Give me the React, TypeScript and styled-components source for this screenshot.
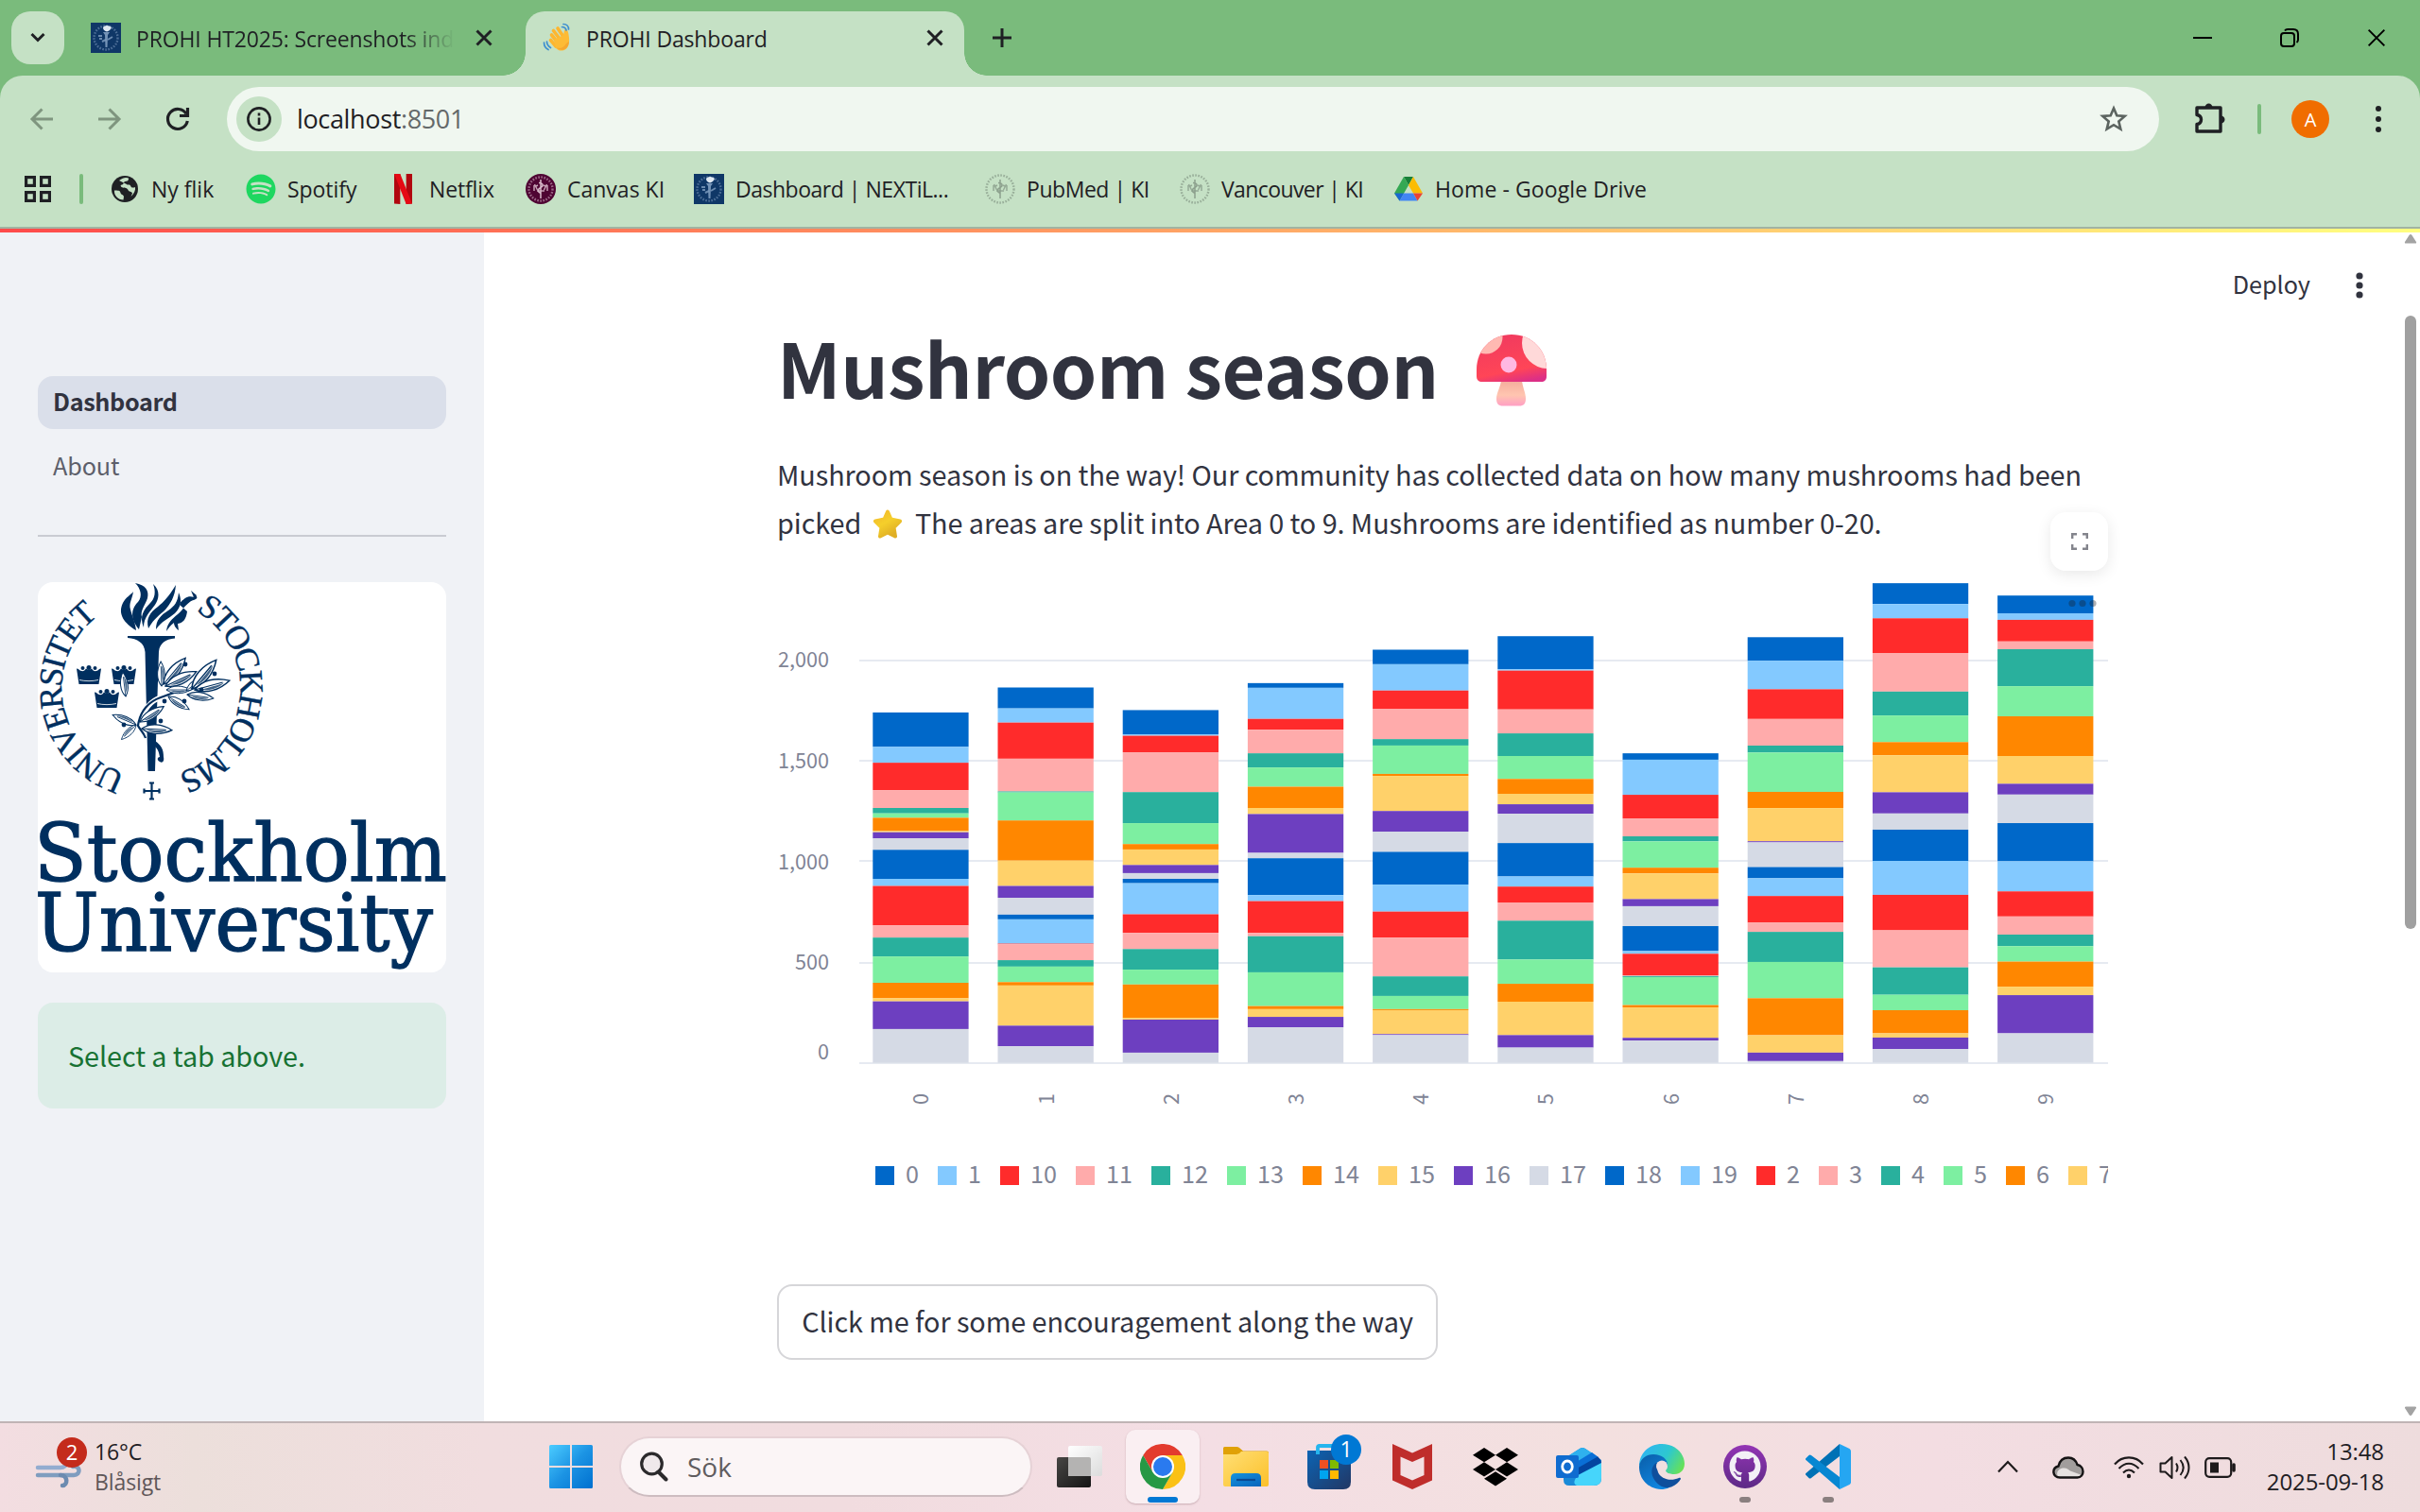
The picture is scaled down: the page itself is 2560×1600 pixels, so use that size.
import React from "react";
import styled, { createGlobalStyle, css } from "styled-components";
import { FaGithub, FaSpotify } from "react-icons/fa";

const segoe = `"Open Sans", "Noto Sans", sans-serif`;
const source = `"Noto Sans CJK SC", "Noto Sans", sans-serif`;

const Global = createGlobalStyle`
  *, *::before, *::after { box-sizing: border-box; }
  body { margin: 0; overflow: hidden; }
  svg { display: block; flex: none; }
`;

const Screen = styled.div`
  width: 2560px;
  height: 1600px;
  display: flex;
  flex-direction: column;
  overflow: hidden;
  background: #fff;
  font-family: ${segoe};
  color: #1f2024;
`;

/* ---------- browser chrome ---------- */

const TabStrip = styled.div`
  height: 80px;
  flex: none;
  display: flex;
  align-items: stretch;
  background: #7abb7c;
  padding: 12px 0 0 12px;
`;

const TabSearch = styled.button`
  width: 56px;
  height: 56px;
  padding: 0;
  border: 0;
  border-radius: 20px;
  background: #c5e1c5;
  display: grid;
  place-items: center;
`;

const Tab = styled.div<{ $width: number; $active?: boolean }>`
  position: relative;
  width: ${(p) => p.$width}px;
  display: flex;
  align-items: center;
  padding: 0 22px 12px ${(p) => (p.$active ? 18 : 28)}px;
  ${(p) =>
    p.$active &&
    css`
      background: #c5e1c5;
      border-radius: 20px 20px 0 0;
      &::before,
      &::after {
        content: "";
        position: absolute;
        bottom: 0;
        width: 24px;
        height: 24px;
      }
      &::before {
        left: -24px;
        background: radial-gradient(circle at 0 0, transparent 23.5px, #c5e1c5 24px);
      }
      &::after {
        right: -24px;
        background: radial-gradient(circle at 100% 0, transparent 23.5px, #c5e1c5 24px);
      }
    `}
`;

const TabTitle = styled.span<{ $fade?: boolean; $ml: number }>`
  flex: 1;
  margin-left: ${(p) => p.$ml}px;
  margin-right: 22px;
  padding-top: 2px;
  white-space: nowrap;
  overflow: hidden;
  font-size: 23px;
  line-height: 32px;
  letter-spacing: -0.15px;
  ${(p) =>
    p.$fade &&
    css`
      mask-image: linear-gradient(90deg, #000 84%, transparent 100%);
    `}
`;

const Spacer = styled.div`
  flex: 1;
`;

const Slot = styled.div<{ $w: number; $pb?: number }>`
  width: ${(p) => p.$w}px;
  flex: none;
  display: grid;
  place-items: center;
  padding-bottom: ${(p) => p.$pb ?? 0}px;
`;

const Toolbar = styled.div`
  height: 162px;
  flex: none;
  background: linear-gradient(#7abb7c, #7abb7c) top / 100% 30px no-repeat;
  border-bottom: 2px solid #a1b3a2;
`;

const ToolbarSurface = styled.div`
  height: 160px;
  border-radius: 24px 24px 0 0;
  background: #c5e1c5;
`;

const AddressRow = styled.div`
  height: 92px;
  display: flex;
  align-items: center;
  padding-left: 8px;
`;

const Omnibox = styled.div`
  width: 2044px;
  height: 68px;
  margin: 0 18px 0 16px;
  padding: 0 32px 0 10px;
  border-radius: 34px;
  background: #f0f7f0;
  display: flex;
  align-items: center;
`;

const InfoChip = styled.div`
  width: 48px;
  height: 48px;
  border-radius: 50%;
  background: #c5e1c5;
  display: grid;
  place-items: center;
`;

const Url = styled.span`
  flex: 1;
  margin-left: 16px;
  padding-bottom: 2px;
  font-size: 27px;
  letter-spacing: -0.35px;
  span {
    color: #64696a;
  }
`;

const Divider = styled.i<{ $h: number; $m: string }>`
  width: 4px;
  height: ${(p) => p.$h}px;
  margin: ${(p) => p.$m};
  border-radius: 2px;
  background: #7abb7c;
`;

const Avatar = styled.div`
  width: 40px;
  height: 40px;
  border-radius: 50%;
  background: #f06d00;
  color: #fff;
  font-size: 20px;
  display: grid;
  place-items: center;
`;

const Bookmarks = styled.div`
  height: 56px;
  display: flex;
  align-items: center;
  padding-left: 26px;
`;

const Bookmark = styled.div<{ $w: number; $ls?: number }>`
  width: ${(p) => p.$w}px;
  display: flex;
  align-items: center;
  gap: 12px;
  white-space: nowrap;
  font-size: 23px;
  letter-spacing: ${(p) => p.$ls ?? -0.05}px;
`;

/* ---------- page ---------- */

const Page = styled.div`
  height: 1262px;
  flex: none;
  display: flex;
  flex-direction: column;
  font-family: ${source};
  color: #31333f;
`;

const Decoration = styled.div`
  height: 4px;
  flex: none;
  background: linear-gradient(90deg, #ff4b4b, #ffff80);
`;

const Columns = styled.div`
  flex: 1;
  display: flex;
`;

const Sidebar = styled.aside`
  width: 512px;
  flex: none;
  background: #f0f2f6;
  padding: 152px 40px 0;
`;

const NavItem = styled.div<{ $active?: boolean }>`
  height: 56px;
  margin-bottom: 12px;
  padding: 0 16px 2px;
  border-radius: 16px;
  display: flex;
  align-items: center;
  font-size: 25.2px;
  line-height: 1;
  letter-spacing: ${(p) => (p.$active ? -0.35 : -0.1)}px;
  color: ${(p) => (p.$active ? "#31333f" : "#5d5f6a")};
  font-weight: ${(p) => (p.$active ? 700 : 400)};
  background: ${(p) => (p.$active ? "#dadfea" : "transparent")};
`;

const Rule = styled.hr`
  height: 2px;
  border: 0;
  margin: 44px 0 48px;
  background: #c9cbd2;
`;

const LogoCard = styled.div`
  width: 432px;
  height: 413px;
  border-radius: 16px;
  background: #fff;
  overflow: hidden;
`;

const Alert = styled.div`
  height: 112px;
  margin-top: 32px;
  padding: 0 32px 2px;
  border-radius: 16px;
  background: #dcede7;
  color: #177233;
  font-size: 28.8px;
  letter-spacing: -0.08px;
  display: flex;
  align-items: center;
`;

const Main = styled.main`
  flex: 1;
`;

const AppHeader = styled.header`
  height: 112px;
  display: flex;
  align-items: center;
  justify-content: flex-end;
  padding-right: 14px;
  font-size: 25.2px;
`;

const DeployLabel = styled.span`
  padding-bottom: 4px;
`;

const Block = styled.section`
  width: 1408px;
  margin-left: 310px;
`;

const Title = styled.h1`
  margin: 0;
  height: 60px;
  display: flex;
  align-items: center;
  font-size: 79.2px;
  line-height: 60px;
  letter-spacing: -0.36px;
  font-weight: 700;
  white-space: nowrap;
`;

const MushroomSlot = styled.span`
  margin: 8px 0 0 39px;
`;

const Intro = styled.p`
  margin: 58px 0 12px;
  font-size: 28.8px;
  line-height: 51.2px;
  letter-spacing: -0.07px;
  white-space: nowrap;
`;

const StarSlot = styled.span`
  display: inline-block;
  width: 32px;
  height: 32px;
  margin: 0 7px 0 5px;
  vertical-align: -6px;
`;

const ChartFrame = styled.div`
  position: relative;
  height: 700px;
  overflow: visible;
`;

const FullscreenButton = styled.button`
  position: absolute;
  top: -48px;
  right: 0;
  width: 61px;
  height: 62px;
  padding: 0;
  border: 0;
  border-radius: 16px;
  background: #fff;
  box-shadow: 0 4px 16px rgba(0, 0, 0, 0.09);
  display: grid;
  place-items: center;
`;

const EncourageButton = styled.button`
  width: 699px;
  height: 80px;
  margin-top: 69px;
  padding: 0 0 3px;
  border: 2px solid #d6d6d9;
  border-radius: 16px;
  background: #fff;
  color: #31333f;
  font-family: ${source};
  font-size: 28.8px;
  letter-spacing: -0.07px;
  white-space: nowrap;
`;

const Scrollbar = styled.div`
  width: 20px;
  flex: none;
  display: flex;
  flex-direction: column;
  align-items: center;
  padding: 2px 0 6px;
`;

const Thumb = styled.div`
  width: 12px;
  height: 649px;
  margin-top: 76px;
  border-radius: 6px;
  background: #a0a0a0;
`;

/* ---------- taskbar ---------- */

const Taskbar = styled.div`
  height: 96px;
  flex: none;
  display: flex;
  align-items: stretch;
  border-top: 2px solid #c0b4b5;
  background: linear-gradient(90deg, #f3dde1 0%, #ecdfdb 8%, #f1dddf 20%, #f1dcdf 35%, #f4dee4 50%, #f3e0df 66%, #f3dde2 80%, #eedcdd 100%);
`;

const Weather = styled.div`
  width: 560px;
  display: flex;
  align-items: center;
  padding-left: 36px;
  gap: 6px;
  font-size: 23px;
  line-height: 32px;
  letter-spacing: -0.1px;
  span + span {
    color: #5f5759;
  }
`;

const TwoLines = styled.div<{ $right?: boolean }>`
  display: flex;
  flex-direction: column;
  padding-bottom: 3px;
  text-align: ${(p) => (p.$right ? "right" : "left")};
`;

const SearchBox = styled.div`
  width: 437px;
  height: 64px;
  align-self: center;
  margin: 0 6px 2px 7px;
  padding: 0 20px;
  display: flex;
  align-items: center;
  gap: 20px;
  border-radius: 32px;
  border: 2px solid #e6d2d6;
  border-bottom-color: #cdbcc0;
  background: #fbf5f6;
  color: #605c5e;
  font-size: 28px;
`;

const AppSlot = styled.div<{ $active?: boolean }>`
  position: relative;
  width: ${(p) => (p.$active ? 78 : 88)}px;
  margin: ${(p) => (p.$active ? "7px 5px 9px" : "0")};
  padding-bottom: ${(p) => (p.$active ? 0 : 2)}px;
  flex: none;
  display: grid;
  place-items: center;
  ${(p) =>
    p.$active &&
    css`
      border-radius: 10px;
      background: #faeff2;
      box-shadow: 0 1px 2px rgba(120, 80, 90, 0.35);
    `}
`;

const Marker = styled.i<{ $active?: boolean }>`
  position: absolute;
  bottom: ${(p) => (p.$active ? 1 : 10)}px;
  width: ${(p) => (p.$active ? 32 : 12)}px;
  height: 6px;
  border-radius: 3px;
  background: ${(p) => (p.$active ? "#0078d4" : "#8a7f7f")};
`;

const CountBadge = styled.span`
  position: absolute;
  left: 46px;
  top: 12px;
  width: 32px;
  height: 32px;
  border-radius: 50%;
  background: #0078d4;
  color: #fff;
  font-size: 23px;
  line-height: 31px;
  text-align: center;
`;

const Clock = styled.div`
  width: 140px;
  margin-right: 38px;
  display: flex;
  align-items: center;
  justify-content: flex-end;
  font-size: 24px;
  line-height: 32px;
  letter-spacing: -0.1px;
`;

/* ---------- icons ---------- */

const ink = "#1f2024";

const Cross = ({ size = 18, w = 3, color = ink }) => (
  <svg width={size} height={size} viewBox="0 0 18 18" stroke={color} strokeWidth={w}>
    <path d="M1.5 1.5 16.5 16.5M16.5 1.5 1.5 16.5" />
  </svg>
);

const VDots = ({ gap, r, color }: { gap: number; r: number; color: string }) => (
  <svg width={12} height={40} viewBox="-6 -20 12 40" fill={color}>
    <circle cy={-gap} r={r} />
    <circle r={r} />
    <circle cy={gap} r={r} />
  </svg>
);

const SealIcon = ({ bg, fg, round }: { bg?: string; fg: string; round?: boolean }) => (
  <svg width={32} height={32} viewBox="0 0 32 32" fill="none" stroke={fg}>
    {bg && (round ? <circle cx={16} cy={16} r={16} fill={bg} stroke="none" /> : <path d="M0 0h32v32H0z" fill={bg} stroke="none" />)}
    <circle cx={16} cy={16} r={bg ? 12.5 : 14.5} strokeWidth={2.4} strokeDasharray="1.6 1.5" opacity={bg ? 0.55 : 0.8} />
    {round ? (
      <g strokeWidth={1.5}>
        <path d="M16 6v20M14 9.500c5 0 5 3.500 2 5s-4 4 0 6" />
        <path d="M9.500 11l3 6M9 12v6M22.500 11l-3 6M23 12v6M11 13l2-1M19 12l2 1M12 18h8" opacity={0.85} />
      </g>
    ) : (
      <>
        <path d="M13 10h7l-2 3-.5 13h-2L15 13z" fill={fg} stroke="none" opacity={0.9} />
        <path d="M13 5c1-1 2-2 4-2s4 1 5 2c-1 2-2 4-5 4.500-3-.5-4-2.500-4-4.500z" fill="#dfe8f2" stroke="none" />
        <path d="M8 14h4M9 17h3M18 18l5-3M12 20l4-2" strokeWidth={2} opacity={0.8} />
      </>
    )}
  </svg>
);

const WaveIcon = () => (
  <svg width={32} height={32} viewBox="0 0 32 32">
    <g stroke="#fdb62f" strokeWidth={3.600} strokeLinecap="round" fill="none">
      <path d="M9.500 13 16 21M11.500 8.500 18 17M16 6 21.500 14M8.500 18.500 14 25" />
    </g>
    <path d="M12 18 22 13c1-3 .5-6 2.500-6s3 4 3.500 9c.5 6-1 10-3.500 12-3.500 2.500-7.500 2-10.500-1z" fill="#fdbb35" />
    <path d="M25 22c-2.500 5-6.500 5.500-10 4.500 3 2.800 7 3 10 .5 2-2 3-4 3-7z" fill="#f09a2b" opacity={0.6} />
    <g stroke="#3e8fd0" strokeWidth={1.700} fill="none" strokeLinecap="round">
      <path d="M20.500 4.500c2.500 0 4 1.500 4.500 3.500M22 1.500c3.500 0 5.500 2.500 5.500 5.500M4.500 20c0 3 1.500 5 4 6.500M1.500 21c0 4 1.500 6 4.500 7.500" />
    </g>
  </svg>
);

const BackArrow = ({ flip }: { flip?: boolean }) => (
  <svg width={26} height={26} viewBox="0 0 26 26" fill="none" stroke="#7f957f" strokeWidth={3} transform={flip ? "scale(-1 1)" : undefined}>
    <path d="M25 13H3M13.500 2.500 3 13l10.500 10.500" />
  </svg>
);

const ReloadIcon = () => (
  <svg width={28} height={28} viewBox="0 0 28 28" fill="none" stroke={ink} strokeWidth={3.200}>
    <path d="M23 8.500A10.500 10.500 0 1 0 24.300 16" />
    <path d="M24.500 2v8.500H16" />
  </svg>
);

const Star = () => (
  <svg width={32} height={32} viewBox="0 0 32 32" fill="none" stroke="#5c6460" strokeWidth={2.600} strokeLinejoin="miter">
    <path d="M16 4.500l3.300 7.700 8.400.7-6.400 5.500 2 8.200-7.300-4.400-7.300 4.400 2-8.200-6.400-5.500 8.400-.7z" />
  </svg>
);

const PuzzleIcon = () => (
  <svg width={34} height={36} viewBox="0 0 34 36" fill="none" stroke={ink} strokeWidth={3.400} strokeLinejoin="round">
    <path d="M3 8h25v25H3v-7.500c3-.5 4.500-2.500 4.500-5S6 16 3 15.500z" />
    <path d="M11.500 8c0-6 8-6 8 0zM28 16.500c6 0 6 8 0 8z" fill={ink} stroke="none" />
  </svg>
);

const GridIcon = () => (
  <svg width={28} height={28} viewBox="0 0 28 28" fill="none" stroke={ink} strokeWidth={3.200}>
    {[1.6, 17.600].map((x) => [1.6, 17.600].map((y) => <rect key={`${x}${y}`} x={x} y={y} width={8.800} height={8.800} />))}
  </svg>
);

const GlobeIcon = () => (
  <svg width={30} height={30} viewBox="0 0 30 30">
    <circle cx={15} cy={15} r={14} fill={ink} />
    <path d="M4 16.500c4 0 6 0 6.500 2.500s3 1.500 3.500 4l-.5 3.500C8 26.500 3.500 22 4 16.500zM9 6c4-3.500 8-3.500 10-2.500 0 3-1 3-3.500 3.500s-1 3-3.500 3.500-1 2.500 1 3 4.500 0 5.500 2.500 3.500 1 4.500 3.500L21.500 23C25 20 26.500 16 26 13c-2 1-4 1-5-1.500-1-2-3 0-4-1.500" fill="#c5e1c5" />
  </svg>
);

const NetflixIcon = () => (
  <svg width={19} height={32} viewBox="0 0 19.5 32" preserveAspectRatio="none">
    <path d="M0 0h6.500v32L0 31.500zM13 0h6.500v31.500L13 32z" fill="#b1060f" />
    <path d="M0 0h6.500l13 31.500L13 32z" fill="#e50914" />
  </svg>
);

const DriveIcon = () => (
  <svg width={30} height={28} viewBox="0 0 30 28">
    <path d="M10 1h10l-5 9z" fill="#188038" />
    <path d="M10 1l5 9L5.500 26.500 0 18.500z" fill="#34a853" />
    <path d="M20 1l10 17.500H20L15 10z" fill="#fbbc04" />
    <path d="M0 18.500h10L5.500 26.500z" fill="#1967d2" />
    <path d="M10 18.500h10l4.500 8h-19z" fill="#4285f4" />
    <path d="M20 18.500h10l-5.500 8z" fill="#ea4335" />
  </svg>
);

const Mushroom = () => (
  <svg width={76} height={78} viewBox="0 0 76 78">
    <defs>
      <linearGradient id="cap" x1="0.3" y1="0" x2="0.6" y2="1">
        <stop offset="0" stopColor="#f03a5f" />
        <stop offset="0.75" stopColor="#ff4557" />
        <stop offset="1" stopColor="#dc2f86" />
      </linearGradient>
      <linearGradient id="stem" x1="0" y1="0" x2="0" y2="1">
        <stop offset="0" stopColor="#f3a99a" />
        <stop offset="0.6" stopColor="#ffc5b0" />
        <stop offset="1" stopColor="#ff9fc4" />
      </linearGradient>
      <clipPath id="capClip">
        <path d="M38 1C17 1 1 17 1 38v7c0 4 2 6 6 6h62c4 0 6-2 6-6v-7C75 17 59 1 38 1z" />
      </clipPath>
    </defs>
    <path d="M27 48h22c0 8 4 14 4 21 0 5-2 7.500-7 7.500H29c-5 0-7-2.500-7-7.500 0-7 5-13 5-21z" fill="url(#stem)" />
    <g clipPath="url(#capClip)">
      <path d="M0 0h76v52H0z" fill="url(#cap)" />
      <circle cx={11} cy={4} r={17.500} fill="#ffb9b2" />
      <circle cx={76} cy={10} r={27} fill="#ffd9d9" />
      <circle cx={35} cy={33} r={8.500} fill="#ffb8e2" />
    </g>
  </svg>
);

const StarEmoji = () => (
  <svg width={32} height={32} viewBox="0 0 32 32">
    <defs>
      <linearGradient id="gold" x1="0" y1="0" x2="0.6" y2="1">
        <stop offset="0" stopColor="#f2b82c" />
        <stop offset="0.5" stopColor="#f5cf2b" />
        <stop offset="1" stopColor="#dfae25" />
      </linearGradient>
    </defs>
    <path
      d="M16 2.500l3.500 8 9.500 2-6.500 6.500 1.500 9.500-8-4-8 4 1.500-9.500L3 12.500l9.500-2z"
      fill="url(#gold)"
      stroke="url(#gold)"
      strokeWidth={4}
      strokeLinejoin="round"
    />
  </svg>
);

/* ---------- Stockholm University emblem ---------- */

const navy = "#002f5f";

const Crown = ({ x, y }: { x: number; y: number }) => (
  <g transform={`translate(${x} ${y})`} fill={navy}>
    <path d="M-13-6.500c2 0 3 2 5 2.500s4-.5 5-2.500l1.500 1h3l1.500-1c1 2 3 3 5 2.500s3-2.500 5-2.500l-2.500 16.500h-21z" />
    <circle cy={-7.500} r={2.500} />
    <circle cx={-6.500} cy={-7} r={2} />
    <circle cx={6.500} cy={-7} r={2} />
    <path d="M-10 5.500c6 1.500 14 1.500 20 0" stroke="#fff" strokeWidth={0.8} fill="none" />
  </g>
);

const Leaf = ({ x, y, a, l = 26 }: { x: number; y: number; a: number; l?: number }) => (
  <g transform={`translate(${x} ${y}) rotate(${a}) scale(${l / 26})`} stroke={navy} strokeWidth={1}>
    <path d="M0 0C7-5.500 17-5 26 0 17 5 7 5 0 0z" fill="#fff" />
    <path d="M4 .8C10 1 17 1 22 .5 16 3.500 9 3.500 4 .8z" fill={navy} stroke="none" opacity={0.75} />
    <path d="M0 0h21" strokeWidth={0.8} />
  </g>
);

const leaves = [
  [93, 121, -97, 26], [104, 151, -157, 27], [104, 151, 135, 22], [108, 148, -33, 30], [110, 155, 3, 32],
  [131, 110, -92, 26], [133, 108, -50, 36], [135, 110, -25, 36], [136, 114, 0, 26], [138, 121, 32, 26],
  [157, 115, -38, 24], [163, 113, -50, 40], [166, 114, -15, 38], [158, 119, 8, 28],
];
const berries = [[156, 87], [187, 97], [173, 114], [134, 126], [155, 126], [130, 147], [91, 151]];

const Emblem = () => (
  <svg width={432} height={413} viewBox="0 0 432 413">
    <defs>
      <path id="ringLeft" d="M93 202.500A94.500 94.500 0 0 1 66.500 34" />
      <path id="ringRight" d="M167 30.500A94.500 94.500 0 0 1 146 203" />
    </defs>
    <g fill={navy} stroke={navy} strokeWidth={0.4} fontFamily='"Liberation Serif", serif' fontSize={35.500}>
      <text textLength={210} lengthAdjust="spacing">
        <textPath href="#ringLeft">UNIVERSITET</textPath>
      </text>
      <text textLength={218} lengthAdjust="spacing">
        <textPath href="#ringRight">STOCKHOLMS</textPath>
      </text>
    </g>
    <path d="M120.500 212v18M112 221h17M118 212.500h5M118 229.500h5M112.500 218.500v5M128.500 218.500v5" stroke={navy} strokeWidth={2.200} />
    <Crown x={54} y={98} />
    <Crown x={91} y={98} />
    <Crown x={73} y={123} />
    <path d="M95 57h50v2.500c-10 1-16 5-17 14L124 200h-7.500l-3-126c-1-10-8-14-18.500-15z" fill={navy} />
    <path d="M124 168c7 5 9 9 9 17 1 4-1 7-4 5-3-1-3-5 0-5-1-6-2-8-5-11z" fill={navy} />
    <g fill={navy}>
      <path d="M104 51C92 44 84 34 90 22c3-6 9-9 11-12-1 8-5 12-3 19 2 8 5 13 6 22z" />
      <path d="M107 50C97 38 99 28 106 21c5-6 3-14-3-20 11 2 15 8 13 16-2 7-8 13-6 20z" />
      <path d="M112 48c-5-12 0-19 7-26 5-5 6-12 3-20 8 7 6 16 2 22-5 7-12 13-12 24z" />
      <path d="M117 49c-3-11 2-17 10-23 6-5 11-10 19-23-1 13-6 20-11 26-6 6-12 9-18 20z" />
      <path d="M125 50c0-10 5-15 13-20 7-5 10-9 11-19 4 9 2 16-4 22-7 6-14 8-20 17z" />
      <path d="M136 52c1-9 6-13 12-18 5-4 6-8 14-14 6-2 8-3 5-6l-9 6c-3-2-6-2-8 4l8 7c-1 8-4 12-10 13l1 7c-4-3-5-6-5-8-4 3-6 6-8 9z" />
      <path d="M151 22c4-5 8-8 14-6l-3-7 6 5c-5 6-9 9-17 8z" />
    </g>
    <path d="M108 152c3-16 10-26 22-30 12-4 16-12 26-12" fill="none" stroke="#fff" strokeWidth={5.500} />
    <path d="M114 165c-2-6-6-9-8-13 2-16 12-26 24-30 12-4 18-8 34-9" fill="none" stroke={navy} strokeWidth={2.200} />
    {leaves.map(([x, y, a, l], i) => (
      <Leaf key={i} x={x} y={y} a={a} l={l} />
    ))}
    {berries.map(([x, y], i) => (
      <circle key={i} cx={x} cy={y} r={2.400} fill={navy} />
    ))}
    <g fill={navy} stroke={navy} strokeWidth={1.400} fontFamily='"DejaVu Serif", serif' fontSize={84}>
      <text x={-4} y={315.500} textLength={437} lengthAdjust="spacingAndGlyphs">Stockholm</text>
      <text x={-3} y={390} textLength={421} lengthAdjust="spacingAndGlyphs">University</text>
    </g>
  </svg>
);

/* ---------- stacked bar chart ---------- */

const palette = ["#0068c9", "#83c9ff", "#ff2b2b", "#ffabab", "#29b09d", "#7defa1", "#ff8700", "#ffd16a", "#6d3fc0", "#d5dae5"];
const legend = ["0", "1", "10", "11", "12", "13", "14", "15", "16", "17", "18", "19", "2", "3", "4", "5", "6", "7"];

const fine = (edges: number[]) => edges.map((v) => v / 2.8 + 10);
const coarse = (edges: number[]) => edges.map((v) => v / 2.45 - 70);
const stacks = [
  fine([431, 533, 580, 661, 714, 730, 743, 782, 786, 804, 838, 924, 945, 1062, 1098, 1154, 1232, 1278, 1287, 1369, 1469]),
  fine([357, 419, 461, 568, 665, 668, 751, 870, 945, 980, 1030, 1044, 1116, 1118, 1165, 1184, 1230, 1240, 1359, 1420, 1469]),
  fine([424, 496, 500, 549, 667, 759, 821, 837, 883, 907, 924, 937, 1029, 1084, 1132, 1193, 1237, 1336, 1341, 1439, 1469]),
  fine([344, 358, 450, 482, 552, 594, 651, 714, 732, 847, 863, 972, 990, 1084, 1094, 1201, 1301, 1310, 1333, 1364, 1469]),
  fine([245, 288, 366, 420, 510, 529, 613, 619, 723, 784, 844, 941, 1021, 1098, 1213, 1271, 1310, 1313, 1384, 1387, 1469]),
  fine([205, 303, 307, 422, 493, 560, 628, 672, 703, 731, 818, 917, 947, 994, 1048, 1163, 1235, 1288, 1387, 1424, 1469]),
  fine([552, 571, 675, 745, 798, 813, 891, 908, 984, 1005, 1064, 1138, 1146, 1210, 1212, 1215, 1298, 1305, 1395, 1403, 1469]),
  coarse([378, 439, 513, 590, 659, 677, 779, 821, 907, 910, 974, 1003, 1049, 1118, 1142, 1220, 1314, 1410, 1455, 1477, 1481]),
  coarse([238, 292, 329, 419, 519, 581, 650, 684, 780, 835, 877, 958, 1046, 1138, 1234, 1305, 1345, 1405, 1416, 1446, 1481]),
  coarse([270, 316, 333, 389, 409, 505, 583, 686, 758, 786, 860, 959, 1037, 1102, 1149, 1179, 1219, 1284, 1306, 1405, 1481]),
];

const ticks: [string, number, number][] = [
  ["2,000", 109, 116.400],
  ["1,500", 215, 223.200],
  ["1,000", 321, 330],
  ["500", 429, 436.200],
  ["0", 535, 531],
];

const Chart = () => {
  let lx = 104;
  return (
    <svg width={1408} height={700} viewBox="0 0 1408 700" fontFamily={source} fill="#808495">
      {ticks.map(([label, y, base]) => (
        <g key={label}>
          <path d={`M87 ${y}H1408`} stroke="#e6eaf1" strokeWidth={2} />
          <text x={55} y={base} textAnchor="end" fontSize={21.600}>{label}</text>
        </g>
      ))}
      {stacks.map((edges, c) => (
        <g key={c} transform={`translate(${101.300 + c * 132.200} 0)`}>
          {palette.concat(palette).map((fill, i) => (
            <rect key={i} y={edges[i]} width={101.300} height={edges[i + 1] - edges[i]} fill={fill} />
          ))}
          <text transform="translate(59 573) rotate(-90)" textAnchor="middle" fontSize={21.600}>{c}</text>
        </g>
      ))}
      {legend.map((label, i) => {
        const x = lx;
        lx += label.length > 1 ? 80 : 66;
        return (
          <g key={label}>
            <rect x={x} y={644} width={20} height={20} fill={palette[i % 10]} />
            <text x={x + 32} y={662} fontSize={25.200}>{label}</text>
          </g>
        );
      })}
      <g fill="#1b1e23" opacity={0.35}>
        <circle cx={1370} cy={48.500} r={3.600} />
        <circle cx={1381} cy={48.500} r={3.600} />
        <circle cx={1392} cy={48.500} r={3.600} />
      </g>
    </svg>
  );
};

/* ---------- taskbar icons ---------- */

const WeatherIcon = () => (
  <svg width={58} height={66} viewBox="0 0 58 66">
    <g fill="none" strokeWidth={4.500} strokeLinecap="round">
      <path d="M4 33h24c8 0 9-11 2-11" stroke="#93acd0" />
      <path d="M4 41h38c8 0 7-11-1-9" stroke="#7f9dbf" />
      <path d="M28 41c8 0 8 11 2 11" stroke="#6c8bb0" />
    </g>
    <circle cx={40} cy={17} r={16} fill="#c42b1c" />
    <text x={40} y={25} textAnchor="middle" fontSize={22} fill="#fff" fontFamily={segoe}>2</text>
  </svg>
);

const WindowsIcon = () => (
  <svg width={46} height={46} viewBox="0 0 46 46">
    <defs>
      <linearGradient id="win" x1="0" y1="0" x2="1" y2="1">
        <stop offset="0" stopColor="#4cccff" />
        <stop offset="0.5" stopColor="#1c94e4" />
        <stop offset="1" stopColor="#0070cf" />
      </linearGradient>
    </defs>
    <path d="M1.500 0H22v22H0V1.500Q0 0 1.500 0zM24 0h20.500Q46 0 46 1.500V22H24zM0 24h22v22H1.500Q0 46 0 44.500zM24 24h22v20.500q0 1.500-1.500 1.500H24z" fill="url(#win)" />
  </svg>
);

const MagnifierIcon = () => (
  <svg width={30} height={32} viewBox="0 0 30 32" fill="none" stroke="#2b2a2c">
    <circle cx={12.500} cy={13} r={10.800} strokeWidth={3.200} fill="#efe9eb" />
    <path d="M19.500 21.500l8 8" strokeWidth={4} strokeLinecap="round" />
  </svg>
);

const TaskViewIcon = () => (
  <svg width={48} height={46} viewBox="0 0 48 46">
    <defs>
      <linearGradient id="tvd" x1="0" y1="0" x2="1" y2="1">
        <stop offset="0" stopColor="#474644" />
        <stop offset="1" stopColor="#151515" />
      </linearGradient>
      <linearGradient id="tvl" x1="0" y1="0" x2="1" y2="1">
        <stop offset="0" stopColor="#fff" />
        <stop offset="1" stopColor="#dcdcdc" />
      </linearGradient>
    </defs>
    <rect y={13} width={36} height={32} rx={2} fill="url(#tvd)" />
    <rect x={12} y={1} width={36} height={32} rx={2} fill="url(#tvl)" />
    <path d="M12 13h22q2 0 2 2v18H12z" fill="#b4b3b2" />
  </svg>
);

const ChromeIcon = () => (
  <svg width={48} height={48} viewBox="-24 -24 48 48">
    <path d="M-20.800-12A24 24 0 0 1 20.800-12L0-12-10.400 6z" fill="#e33b2e" />
    <path d="M20.800-12A24 24 0 0 1 0 24L10.400 6 0-12z" fill="#fbc116" />
    <path d="M0 24A24 24 0 0 1-20.800-12L-10.400 6 10.400 6z" fill="#269845" />
    <circle r={12} fill="#fff" />
    <circle r={10} fill="#2a7aef" />
  </svg>
);

const FolderIcon = () => (
  <svg width={48} height={42} viewBox="0 0 48 42">
    <defs>
      <linearGradient id="fold" x1="0" y1="0" x2="1" y2="1">
        <stop offset="0" stopColor="#ffdf75" />
        <stop offset="1" stopColor="#fcc02a" />
      </linearGradient>
      <linearGradient id="foldb" x1="0" y1="0" x2="1" y2="1">
        <stop offset="0" stopColor="#1593de" />
        <stop offset="1" stopColor="#0864bb" />
      </linearGradient>
    </defs>
    <path d="M0 1.500Q0 0 1.500 0H14q2 0 3 1l4 3.500H46q2 0 2 2V10H0z" fill="#e0a106" />
    <path d="M0 8h14q3 0 5-3h27q2 0 2 2v33q0 2-2 2H2q-2 0-2-2z" fill="url(#fold)" />
    <path d="M8 42v-9q0-5 5-5h22q5 0 5 5v9z" fill="url(#foldb)" />
    <path d="M14 35h20" stroke="#0a4a93" strokeWidth={2.200} />
  </svg>
);

const StoreIcon = () => (
  <svg width={46} height={48} viewBox="0 0 46 48">
    <defs>
      <linearGradient id="bag" x1="0" y1="0" x2="1" y2="1">
        <stop offset="0" stopColor="#0c64b4" />
        <stop offset="1" stopColor="#223764" />
      </linearGradient>
    </defs>
    <path d="M11 9V3.500q0-1.500 1.500-1.500H34" stroke="#25b5ee" strokeWidth={3.800} fill="none" />
    <path d="M0 7h46v33q0 8-8 8H8q-8 0-8-8z" fill="url(#bag)" />
    <path d="M9 7h4v4H9z" fill="#25b5ee" />
    <path d="M13 17h9v9h-9z" fill="#f25022" />
    <path d="M24 17h9v9h-9z" fill="#7fba00" />
    <path d="M13 28h9v9h-9z" fill="#00a4ef" />
    <path d="M24 28h9v9h-9z" fill="#ffb900" />
  </svg>
);

const ShieldIcon = () => (
  <svg width={42} height={48} viewBox="0 0 42 48">
    <path fillRule="evenodd" fill="#bf2d2b" d="M0 0l21 9.500L42 0v38.500L21 48 0 38.500zM8.500 13.500v19.500L21 38.500 33.500 33V13.500L21 19z" />
  </svg>
);

const DropboxIcon = () => (
  <svg width={48} height={41} viewBox="0 0 48 41">
    <path d="M12 0l12 7.700-12 7.600L0 7.700zM36 0l12 7.700-12 7.600-12-7.600zM12 15.300L24 23l-12 7.600L0 23zM36 15.300L48 23l-12 7.600L24 23zM24 25.200l12 7.600-12 7.700-12-7.700z" fill="#000" />
  </svg>
);

const OutlookIcon = () => (
  <svg width={48} height={40} viewBox="0 0 48 40">
    <path d="M8 12L25 1q3-2 6 0l17 12v19q0 8-8 8H14q-6 0-6-6z" fill="#1a8ad8" />
    <path d="M14 8L25 1q3-2 6 0l8 5-18 11z" fill="#2fb1ee" />
    <path d="M20 16L38 5l7 5-21 15z" fill="#0a6fd6" />
    <path d="M22 22L44 9.500Q48 12 48 17L26 29q-4 0-4-7z" fill="#0345a0" />
    <path d="M20 34q2-5 7-7l21-11v16q0 8-8 8H22q-4-2-2-6z" fill="#46d5fb" />
    <rect y={8} width={24} height={24} rx={2} fill="#0f6cd0" />
    <ellipse cx={12} cy={20} rx={5.300} ry={6} fill="none" stroke="#fff" strokeWidth={2.800} />
  </svg>
);

const EdgeIcon = () => (
  <svg width={48} height={48} viewBox="0 0 48 48">
    <defs>
      <linearGradient id="edgeTop" x1="0" y1="0.3" x2="1" y2="0.7">
        <stop offset="0" stopColor="#2fb4f2" />
        <stop offset="0.55" stopColor="#2dc8cf" />
        <stop offset="1" stopColor="#68e255" />
      </linearGradient>
      <linearGradient id="edgeLeft" x1="0" y1="0" x2="0.6" y2="1">
        <stop offset="0" stopColor="#0a5da8" />
        <stop offset="1" stopColor="#0f86e0" />
      </linearGradient>
    </defs>
    <path d="M0 24C0 10 10 0 24 0s24 10 24 21c0 7-5 11-11 11-5 0-9-1-9-4 0-2 2-2 2-5 0-5-5-8-11-8S2 17 0 24z" fill="url(#edgeTop)" />
    <path d="M0 24c1-9 8-13 15-13 9 0 15 5 15 11 0 2-1 3-1.500 4C28 22 26 18.500 21 19c-4 3-6 7-3 14 2 6 8 12 14 13-3 1.500-6 2-9 2C9 47 0 37 0 24z" fill="url(#edgeLeft)" />
    <path d="M18.500 19.500C13 23 12 30 15 36c4 8 12 12 19 9.500 5-2 8-5 10-8.500 0-1-1-1.500-2-1-9 4-19 1-22-6-1.500-4-1-8-1.500-10.500z" fill="#0f4f9c" />
    <circle cx={24} cy={23.500} r={6} fill="#f2dfe0" />
    <path d="M24.500 29c3 4 9 6.500 15 5.500 3-.5 5-2 6.500-4-2 1.500-5 2-9 1.500-5 0-9-1.500-9-4z" fill="#f2dfe0" />
  </svg>
);

const GithubBadge = styled.div`
  width: 46px;
  height: 46px;
  border-radius: 50%;
  display: grid;
  place-items: center;
  color: #f3f0f6;
  background: linear-gradient(#9334b4, #5d2a86);
`;

const VSCodeIcon = () => (
  <svg width={48} height={48} viewBox="0 0 48 48">
    <path d="M0 32.500L3.500 36q1 1 2.500 0L36 13V0L1 30.500q-1.500 1 -1 2z" fill="#0071b5" />
    <path d="M0 15.500L3.500 12q1-1 2.500 0L36 35v13L1 17.500q-1.500-1-1-2z" fill="#0787d2" />
    <path d="M36 0l10.500 5q1.500 1 1.500 2.500v33q0 1.500-1.500 2.500L36 48z" fill="#25a6f2" />
  </svg>
);

const Line = styled.svg.attrs({ fill: "none", stroke: "#1d1a1b" })``;

const App = () => (
  <Screen>
    <Global />
    <TabStrip>
      <TabSearch>
        <svg width={16} height={12} viewBox="0 0 16 12" fill="none" stroke={ink} strokeWidth={3}>
          <path d="M1.500 2L8 8.500 14.500 2" />
        </svg>
      </TabSearch>
      <Tab $width={488}>
        <SealIcon bg="#0f3767" fg="#7f9dc0" />
        <TabTitle $fade $ml={16}>PROHI HT2025: Screenshots index</TabTitle>
        <Cross />
        <Slot $w={13} />
      </Tab>
      <Tab $width={464} $active>
        <WaveIcon />
        <TabTitle $ml={14}>PROHI Dashboard</TabTitle>
        <Cross />
      </Tab>
      <Slot $w={80} $pb={12}>
        <svg width={22} height={22} viewBox="0 0 22 22" stroke={ink} strokeWidth={3}>
          <path d="M11 1v20M1 11h20" />
        </svg>
      </Slot>
      <Spacer />
      <Slot $w={92} $pb={12}>
        <svg width={20} height={2} viewBox="0 0 20 2"><path d="M0 0h20v2H0z" /></svg>
      </Slot>
      <Slot $w={92} $pb={12}>
        <svg width={20} height={20} viewBox="0 0 20 20" fill="none" stroke="#000" strokeWidth={2}>
          <rect x={1} y={5} width={14} height={14} rx={3} />
          <path d="M5 2.500Q6 1 8 1h6q5 0 5 5v6q0 2-1.500 3" />
        </svg>
      </Slot>
      <Slot $w={92} $pb={12}>
        <Cross size={20} w={1.8} color="#000" />
      </Slot>
    </TabStrip>

    <Toolbar>
      <ToolbarSurface>
        <AddressRow>
          <Slot $w={72}><BackArrow /></Slot>
          <Slot $w={72}><BackArrow flip /></Slot>
          <Slot $w={72}><ReloadIcon /></Slot>
          <Omnibox>
            <InfoChip>
              <svg width={26} height={26} viewBox="0 0 26 26" fill="none" stroke={ink} strokeWidth={2.600}>
                <circle cx={13} cy={13} r={11.600} />
                <path d="M13 11.500v7.500M13 6.500v3" />
              </svg>
            </InfoChip>
            <Url>localhost<span>:8501</span></Url>
            <Star />
          </Omnibox>
          <Slot $w={72} $pb={4}><PuzzleIcon /></Slot>
          <Divider $h={32} $m="0 16px 0 14px" />
          <Slot $w={72}><Avatar>A</Avatar></Slot>
          <Slot $w={72}><VDots gap={11} r={3} color={ink} /></Slot>
        </AddressRow>
        <Bookmarks>
          <GridIcon />
          <Divider $h={32} $m="0 28px 0 30px" />
          <Bookmark $w={144} $ls={0}><Slot $w={32}><GlobeIcon /></Slot>Ny flik</Bookmark>
          <Bookmark $w={150}><FaSpotify size={32} color="#1ed760" />Spotify</Bookmark>
          <Bookmark $w={146} $ls={-0.15}><Slot $w={32}><NetflixIcon /></Slot>Netflix</Bookmark>
          <Bookmark $w={178} $ls={0}><SealIcon bg="#4f0433" fg="#d9bccb" round />Canvas KI</Bookmark>
          <Bookmark $w={308} $ls={-0.48}><SealIcon bg="#0f3767" fg="#7f9dc0" />Dashboard | NEXTiL...</Bookmark>
          <Bookmark $w={206} $ls={-0.45}><SealIcon fg="#8ca08d" round />PubMed | KI</Bookmark>
          <Bookmark $w={226} $ls={-0.6}><SealIcon fg="#8ca08d" round />Vancouver | KI</Bookmark>
          <Bookmark $w={290} $ls={0.1}><Slot $w={32}><DriveIcon /></Slot>Home - Google Drive</Bookmark>
        </Bookmarks>
      </ToolbarSurface>
    </Toolbar>

    <Page>
      <Decoration />
      <Columns>
        <Sidebar>
          <NavItem $active>Dashboard</NavItem>
          <NavItem>About</NavItem>
          <Rule />
          <LogoCard><Emblem /></LogoCard>
          <Alert>Select a tab above.</Alert>
        </Sidebar>
        <Main>
          <AppHeader>
            <DeployLabel>Deploy</DeployLabel>
            <Slot $w={46} />
            <VDots gap={10} r={3.600} color="#31333f" />
            <Slot $w={24} />
          </AppHeader>
          <Block>
            <Title>
              Mushroom season
              <MushroomSlot><Mushroom /></MushroomSlot>
            </Title>
            <Intro>
              Mushroom season is on the way! Our community has collected data on how many mushrooms had been
              <br />
              picked <StarSlot><StarEmoji /></StarSlot> The areas are split into Area 0 to 9. Mushrooms are identified as number 0-20.
            </Intro>
            <ChartFrame>
              <Chart />
              <FullscreenButton>
                <svg width={18} height={18} viewBox="0 0 18 18" fill="none" stroke="#83848c" strokeWidth={2.400}>
                  <path d="M1.200 6V1.200H6M12 1.200h4.800V6M16.800 12v4.800H12M6 16.800H1.200V12" />
                </svg>
              </FullscreenButton>
            </ChartFrame>
            <EncourageButton>Click me for some encouragement along the way</EncourageButton>
          </Block>
        </Main>
        <Scrollbar>
          <svg width={14} height={10} viewBox="0 0 14 10" fill="#a3a3a3"><path d="M7 0q1 0 1.500 1L13 8q.5 1.500-1 1.500H2Q.5 9.500 1 8l4.500-7Q6 0 7 0z" /></svg>
          <Thumb />
          <Spacer />
          <svg width={14} height={10} viewBox="0 0 14 10" fill="#a3a3a3"><path d="M7 10q1 0 1.500-1L13 2Q13.500.5 12 .5H2Q.5.5 1 2l4.500 7q.5 1 1.500 1z" /></svg>
        </Scrollbar>
      </Columns>
    </Page>

    <Taskbar>
      <Weather>
        <WeatherIcon />
        <TwoLines>
          <span>16°C</span>
          <span>Blåsigt</span>
        </TwoLines>
      </Weather>
      <AppSlot><WindowsIcon /></AppSlot>
      <SearchBox><MagnifierIcon />Sök</SearchBox>
      <AppSlot><TaskViewIcon /></AppSlot>
      <AppSlot $active><ChromeIcon /><Marker $active /></AppSlot>
      <AppSlot><FolderIcon /></AppSlot>
      <AppSlot><StoreIcon /><CountBadge>1</CountBadge></AppSlot>
      <AppSlot><ShieldIcon /></AppSlot>
      <AppSlot><DropboxIcon /></AppSlot>
      <AppSlot><OutlookIcon /></AppSlot>
      <AppSlot><EdgeIcon /></AppSlot>
      <AppSlot><GithubBadge><FaGithub size={34} /></GithubBadge><Marker /></AppSlot>
      <AppSlot><VSCodeIcon /><Marker /></AppSlot>
      <Spacer />
      <Slot $w={64} $pb={2}>
        <Line width={22} height={14} viewBox="0 0 22 14" strokeWidth={2.200}><path d="M1 12.500L11 2l10 10.500" /></Line>
      </Slot>
      <Slot $w={64}>
        <svg width={34} height={24} viewBox="0 0 34 24">
          <path d="M8 22.500c-8 0-9-10-1.500-12C8 4 12 1.500 17 1.500c5 0 8 3 9.500 7.500 8 1.500 8 13 0 13.500z" fill="#a19d9c" />
          <path d="M7 22c-4-3-1-9 4-9.500 4-.5 6 1 8 3l11 4c-1 2-3 3-5 3z" fill="#e6e2e1" />
          <path d="M8 22.500c-8 0-9-10-1.500-12C8 4 12 1.500 17 1.500c5 0 8 3 9.500 7.500 8 1.500 8 13 0 13.500z" fill="none" stroke="#151314" strokeWidth={2.400} />
        </svg>
      </Slot>
      <Slot $w={64}>
        <Line width={32} height={24} viewBox="0 0 32 24" strokeWidth={2.100}>
          <path d="M1 8.500C9-1 23-1 31 8.500M5.500 13C12 6 20 6 26.500 13M10 17.500c4-4 8-4 12 0" />
          <circle cx={16} cy={21} r={2.200} fill="#1d1a1b" stroke="none" />
        </Line>
      </Slot>
      <Slot $w={32}>
        <Line width={34} height={28} viewBox="0 0 34 28" strokeWidth={2} strokeLinejoin="round">
          <path d="M1.500 9.500v9h5l7 6.500V3l-7 6.500zM18 9.500c2 3 2 6 0 9M22.500 6c4 5 4 11 0 16M27 2.500c6 7 6 16 0 23" />
        </Line>
      </Slot>
      <Slot $w={66}>
        <Line width={34} height={22} viewBox="0 0 34 22" strokeWidth={2.200}>
          <rect x={1.200} y={1.200} width={27} height={19.600} rx={4} />
          <path d="M6 5.500h9v11H6z" fill="#1d1a1b" stroke="none" />
          <path d="M31 8v6" strokeWidth={3.600} strokeLinecap="round" />
        </Line>
      </Slot>
      <Clock>
        <TwoLines $right>
          <span>13:48</span>
          <span>2025-09-18</span>
        </TwoLines>
      </Clock>
    </Taskbar>
  </Screen>
);

export default App;
